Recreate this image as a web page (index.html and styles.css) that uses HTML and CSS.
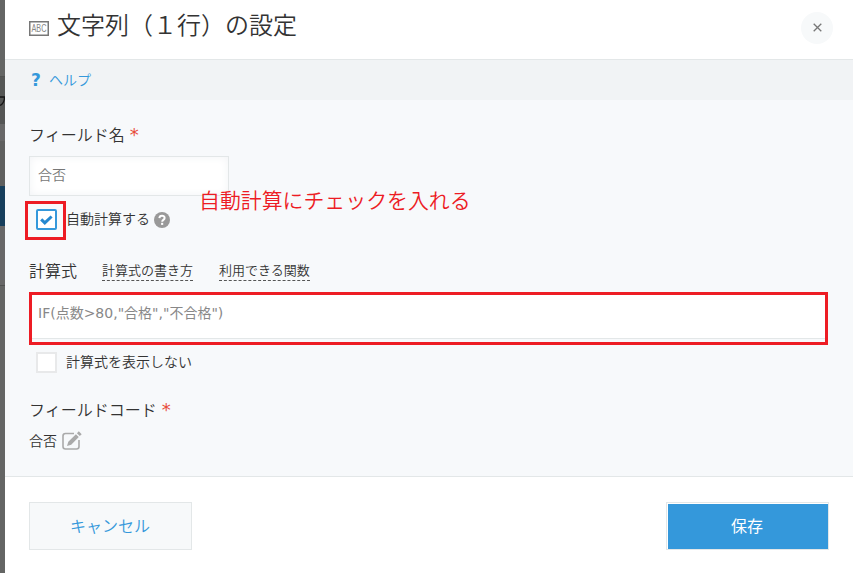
FILE: index.html
```html
<!DOCTYPE html>
<html lang="ja">
<head>
<meta charset="utf-8">
<title>文字列（１行）の設定</title>
<link rel="stylesheet" href="styles.css">
</head>
<body>
<div class="backdrop"><div class="backdrop-tab"><svg width="5" height="14" viewBox="0 0 5 14"><path d="M0 4h5M4.500 4Q4.500 10 0 12.500" fill="none" stroke="#151515" stroke-width="1.300"/></svg></div><div class="backdrop-panel"></div><div class="backdrop-action"></div><div class="backdrop-list"></div></div>
<main class="dialog">
  <header class="header">
    <svg class="type-icon" width="20" height="15" viewBox="0 0 20 15"><rect x=".75" y=".75" width="18.500" height="13.500" fill="#fff" stroke="#777" stroke-width="1.500"/><text x="2.500" y="11.300" textLength="15" lengthAdjust="spacingAndGlyphs">ABC</text></svg>
    <h1>文字列（１行）の設定</h1>
    <button class="close" aria-label="閉じる"><svg width="9" height="9" viewBox="0 0 9 9"><path d="M.7.7l7.600 7.600M8.300.7L.7 8.300" stroke="#777" stroke-width="1.300"/></svg></button>
  </header>
  <nav class="help"><b>?</b><a>ヘルプ</a></nav>
  <section class="body">
    <div class="label name-label">フィールド名<span class="required">*</span></div>
    <div class="input">合否</div>
    <div class="check-row auto-row">
      <span class="check-mark"><span class="checkbox checked"><svg width="13" height="10" viewBox="0 0 13 10"><path d="M1.200 4.400l3.600 3.500L11.600 1.500" fill="none" stroke="#2488d0" stroke-width="3"/></svg></span></span>
      <span class="check-text">自動計算する</span>
      <svg class="info" width="16" height="16" viewBox="0 0 16 16"><circle cx="8" cy="8" r="8" fill="#999"/><path d="M5.400 6.100C5.500 2.800 10.700 2.900 10.600 6c0 1.900-2.400 1.900-2.400 3.700" fill="none" stroke="#fff" stroke-width="2"/><rect x="7.100" y="10.800" width="2.100" height="2.100" fill="#fff"/></svg>
      <span class="note">自動計算にチェックを入れる</span>
    </div>
    <div class="formula-head"><span class="label">計算式</span><a>計算式の書き方</a><a>利用できる関数</a></div>
    <div class="formula"><div class="formula-text">IF(点数&gt;80,"合格","不合格")</div></div>
    <div class="check-row hide-row"><span class="checkbox"></span><span>計算式を表示しない</span></div>
    <div class="label code-label">フィールドコード<span class="required">*</span></div>
    <div class="code"><span>合否</span><svg width="20" height="20" viewBox="0 0 20 20"><path d="M12 2.500H3.500Q1 2.500 1 5V15.500Q1 18 3.500 18H14.500Q17 18 17 15.500V9" fill="none" stroke="#aaa" stroke-width="1.600"/><path d="M5 15L6.300 10.800 13.900 3.200 16.800 6.100 9.200 13.700zM14.900 2.200L16.800.3 19.700 3.200 17.800 5.100z" fill="#aaa"/></svg></div>
  </section>
  <footer class="footer"><button class="cancel">キャンセル</button><button class="save">保存</button></footer>
</main>
</body>
</html>
```
FILE: styles.css
```css
* { box-sizing: border-box; }
body { margin: 0; width: 853px; height: 573px; overflow: hidden; display: flex; background: #646564; color: #333; font: 350 14px/20px "Noto Sans CJK JP", sans-serif; }
button { padding: 0; font: inherit; }
.backdrop { width: 5px; flex: none; padding-top: 76px; }
.backdrop-tab { height: 48px; background: #555655; border-top: 1px solid #505150; padding-top: 16px; }
.backdrop-tab svg { display: block; }
.backdrop-panel { height: 62px; border-top: 17px solid #686868; background: #5f605f; }
.backdrop-action { height: 40px; background: #173f5c; }
.backdrop-list { height: 60px; border-bottom: 1px solid #505150; background: #686868; }
.dialog { width: 848px; height: 573px; background: #fff; }
.header { height: 60px; border-bottom: 1px solid #e3e7e8; display: flex; align-items: center; padding: 0 20px 4px 24px; }
.type-icon { margin-top: 1px; overflow: visible; }
.type-icon text { font: 10.5px "Liberation Sans", sans-serif; fill: #888; }
h1 { margin: -7px 0 0 8px; font-size: 24px; line-height: 36px; font-weight: 350; }
.close { width: 32px; height: 32px; margin-left: auto; border: 0; border-radius: 50%; background: #f7f9fa; display: flex; align-items: center; justify-content: center; }
.help { height: 40px; padding: 0 26px; display: flex; align-items: center; gap: 8px; color: #3498db; background: #f1f3f5; }
.help b { width: 10px; font: bold 17px/20px "DejaVu Sans", sans-serif; }
.help a { margin-top: -2px; }
.body { height: 377px; padding: 22px 24px 0; background: #f7f9fb; border-bottom: 1px solid #e3e7e8; }
.label { font-size: 16px; line-height: 24px; }
.required { color: #e74c3c; margin-left: 5px; font: 18px/20px "DejaVu Sans", sans-serif; }
.name-label { height: 24px; margin-bottom: 10px; }
.input { width: 200px; height: 40px; border: 1px solid #e3e7e8; box-shadow: inset 0 0 8px #f1f3f5; background: #fff; padding: 7px 8px; color: #777; }
.check-row { display: flex; align-items: center; }
.auto-row { height: 39px; margin: 5px 0 0 -4px; }
.check-mark { width: 41px; height: 39px; border: 3px solid #ed1c24; padding: 0 0 2px 1px; display: flex; align-items: center; justify-content: center; }
.check-text { margin-top: -5px; }
.checkbox { width: 21px; height: 21px; border: 2px solid #e8e9ea; background: #fff; display: flex; align-items: center; justify-content: center; }
.checked { border-color: #3498db; border-radius: 2px; }
.info { margin: -2px 0 0 4px; }
.note { margin: -43px 0 0 29px; color: #ed1c24; font-size: 20.9px; line-height: 30px; white-space: nowrap; }
.formula-head { height: 24px; margin-top: 18px; display: flex; align-items: center; }
.formula-head a { height: 22px; margin: 0 0 0 25px; font-size: 13px; line-height: 21px; border-bottom: 1px dashed #555; }
.formula-head a + a { margin-left: 26px; }
.formula { width: 799px; height: 53px; margin-top: 10px; border: 3px solid #ed1c24; }
.formula-text { height: 44px; padding: 8px 6px; border-bottom: 1px solid #e3e7e8; background: #fff; color: #888; font-family: "DejaVu Sans", "Noto Sans CJK JP", sans-serif; font-weight: 400; line-height: 20px; }
.hide-row { height: 22px; margin: 6px 0 0 7px; gap: 9px; }
.hide-row span:last-child { margin-top: -2px; }
.code-label { height: 24px; margin-top: 24px; }
.code { height: 24px; margin-top: 8px; display: flex; align-items: center; gap: 5px; }
.code span { margin-top: -2px; }
.footer { height: 96px; padding: 25px 24px 0; display: flex; justify-content: space-between; }
.footer button { width: 163px; height: 48px; border: 1px solid #e3e7e8; background: #f7f9fa; color: #3498db; font-size: 16px; padding: 0 1px 2px 0; }
.footer .save { background: #3498db; color: #fff; box-shadow: inset 1px 1px #fff; font-weight: 400; }
```
